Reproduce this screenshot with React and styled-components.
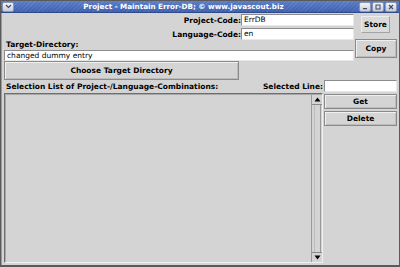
import styled, { createGlobalStyle } from "styled-components";

const Global = createGlobalStyle`
  html, body {
    margin: 0;
    padding: 0;
    background: #d4d4d4;
  }
  * {
    box-sizing: border-box;
  }
`;

const Window = styled.div`
  width: 400px;
  height: 267px;
  display: flex;
  flex-direction: column;
  background: #d4d4d4;
  border: 1px solid #5a5a5a;
  border-bottom-width: 2px;
  font-family: "DejaVu Sans", "Liberation Sans", sans-serif;
  font-size: 7.5px;
  overflow: hidden;
`;

const TitleBar = styled.div`
  height: 12px;
  flex: none;
  display: flex;
  align-items: center;
  padding: 0 2px 0 1px;
  background:
    repeating-linear-gradient(
      135deg,
      rgba(255, 255, 255, 0.08) 0 1px,
      transparent 1px 3px
    ),
    linear-gradient(#5a7dc8, #3e5fae);
  border-bottom: 1px solid #2e4a8a;
`;

const TitleText = styled.div`
  flex: 1;
  text-align: center;
  color: #fff;
  font-weight: bold;
  font-size: 7.2px;
  white-space: nowrap;
  padding-right: 6px;
`;

const WinButton = styled.div`
  width: 12px;
  height: 10px;
  margin-left: ${p => (p.first ? "0" : "1px")};
  background: linear-gradient(#f4f4f4, #c8ccd8);
  border: 1px solid #8a96b8;
  border-radius: 2px;
  display: flex;
  align-items: center;
  justify-content: center;
`;

const Body = styled.div`
  flex: 1;
  display: flex;
  flex-direction: column;
  padding: 1px 2px 2px 2px;
  border-left: 1px solid #9a9a9a;
`;

const Top = styled.div`
  display: grid;
  grid-template-columns: 350px 1fr;
  column-gap: 1px;
`;

const LeftTop = styled.div`
  display: flex;
  flex-direction: column;
`;

const FieldRow = styled.div`
  display: flex;
  justify-content: flex-end;
  align-items: center;
  height: 12px;
  margin-top: ${p => p.mt || 0}px;
`;

const Label = styled.span`
  font-weight: bold;
  color: #000;
  white-space: nowrap;
`;

const TextField = styled.div`
  width: ${p => p.width || "100%"};
  height: ${p => p.h || 12}px;
  flex: none;
  background: #fff;
  border: 1px solid #8c8c8c;
  border-right-color: #e8e8e8;
  border-bottom-color: #e8e8e8;
  padding: 0 2px;
  line-height: ${p => (p.h || 12) - 2}px;
  font-size: 7.5px;
  color: #000;
  white-space: nowrap;
  overflow: hidden;
`;

const DirLabel = styled.div`
  height: 10px;
  line-height: 10px;
  padding-left: 2px;
`;

const Button = styled.div`
  display: flex;
  align-items: center;
  justify-content: center;
  flex: none;
  height: ${p => p.h || 17}px;
  width: ${p => p.w || "100%"};
  margin-top: ${p => p.mt || 0}px;
  border: 1px solid #8a8a8a;
  box-shadow: inset 1px 1px 0 #f0f0f0, inset -1px -1px 0 #bcbcbc;
  background: #d4d4d4;
  font-weight: bold;
  color: #000;
`;

const StoreButton = styled.div`
  display: flex;
  align-items: center;
  justify-content: center;
  height: 17px;
  margin: 2px 7px 0 6px;
  border: 1px solid #ececec;
  border-right-color: #a4a4a4;
  border-bottom-color: #a4a4a4;
  background: #dadada;
  font-weight: bold;
  color: #000;
`;

const RightTop = styled.div`
  display: flex;
  flex-direction: column;
`;

const Bottom = styled.div`
  flex: 1;
  display: grid;
  grid-template-columns: 319px 1fr;
  grid-template-rows: 13px 1fr;
  column-gap: 1px;
`;

const ListHead = styled.div`
  display: flex;
  justify-content: space-between;
  align-items: center;
  padding-left: 2px;
`;

const List = styled.div`
  display: flex;
  justify-content: flex-end;
  border: 1px solid #6e6e6e;
  border-right-color: #f0f0f0;
  border-bottom-color: #f0f0f0;
  box-shadow: inset 1px 1px 0 #a8a8a8;
  background: #d4d4d4;
`;

const ScrollBar = styled.div`
  width: 11px;
  display: flex;
  flex-direction: column;
  border-left: 1px solid #9a9a9a;
  margin-top: 1px;
`;

const ArrowBox = styled.div`
  height: 10px;
  display: flex;
  align-items: center;
  justify-content: center;
  border-bottom: ${p => (p.top ? "1px solid #8a8a8a" : "none")};
  border-top: ${p => (p.top ? "none" : "1px solid #8a8a8a")};
  background: #d4d4d4;
`;

const Track = styled.div`
  flex: 1;
  border-left: 1px solid #bdbdbd;
  margin-left: 2px;
  border-right: 1px solid #9a9a9a;
  margin-right: 1px;
`;

const Side = styled.div`
  display: flex;
  flex-direction: column;
  padding-top: 1px;
`;

const Arrow = ({ up }) => (
  <svg width="7" height="5" viewBox="0 0 7 5">
    {up ? (
      <polygon points="0.5,4.5 3.5,0.5 6.5,4.5" fill="#000" />
    ) : (
      <polygon points="0.5,0.5 6.5,0.5 3.5,4.5" fill="#000" />
    )}
  </svg>
);

export default function App() {
  return (
    <>
      <Global />
      <Window>
        <TitleBar>
          <WinButton first>
            <svg width="7" height="5" viewBox="0 0 7 5">
              <polyline points="1,1 3.5,3.5 6,1" fill="none" stroke="#3c4a70" strokeWidth="1.2" />
            </svg>
          </WinButton>
          <TitleText>Project - Maintain Error-DB; © www.javascout.biz</TitleText>
          <WinButton first>
            <svg width="6" height="6" viewBox="0 0 6 6">
              <rect x="1" y="4" width="4" height="1.2" fill="#3c4a70" />
            </svg>
          </WinButton>
          <WinButton>
            <svg width="6" height="6" viewBox="0 0 6 6">
              <rect x="1" y="1" width="4" height="4" fill="none" stroke="#3c4a70" strokeWidth="1" />
            </svg>
          </WinButton>
          <WinButton>
            <svg width="6" height="6" viewBox="0 0 6 6">
              <path d="M1 1 L5 5 M5 1 L1 5" stroke="#3c4a70" strokeWidth="1.2" />
            </svg>
          </WinButton>
        </TitleBar>
        <Body>
          <Top>
            <LeftTop>
              <FieldRow>
                <Label>Project-Code:</Label>
                <TextField width="113px">ErrDB</TextField>
              </FieldRow>
              <FieldRow mt={2}>
                <Label>Language-Code:</Label>
                <TextField width="113px">en</TextField>
              </FieldRow>
              <DirLabel>
                <Label>Target-Directory:</Label>
              </DirLabel>
              <TextField h={11}>changed dummy entry</TextField>
              <Button w="235px" h={19}>Choose Target Directory</Button>
            </LeftTop>
            <RightTop>
              <StoreButton>Store</StoreButton>
              <Button h={19} mt={6}>Copy</Button>
            </RightTop>
          </Top>
          <Bottom>
            <ListHead>
              <Label>Selection List of Project-/Language-Combinations:</Label>
              <Label>Selected Line:</Label>
            </ListHead>
            <TextField />
            <List>
              <ScrollBar>
                <ArrowBox top>
                  <Arrow up />
                </ArrowBox>
                <Track />
                <ArrowBox>
                  <Arrow />
                </ArrowBox>
              </ScrollBar>
            </List>
            <Side>
              <Button h={15}>Get</Button>
              <Button h={15} mt={2}>Delete</Button>
            </Side>
          </Bottom>
        </Body>
      </Window>
    </>
  );
}
